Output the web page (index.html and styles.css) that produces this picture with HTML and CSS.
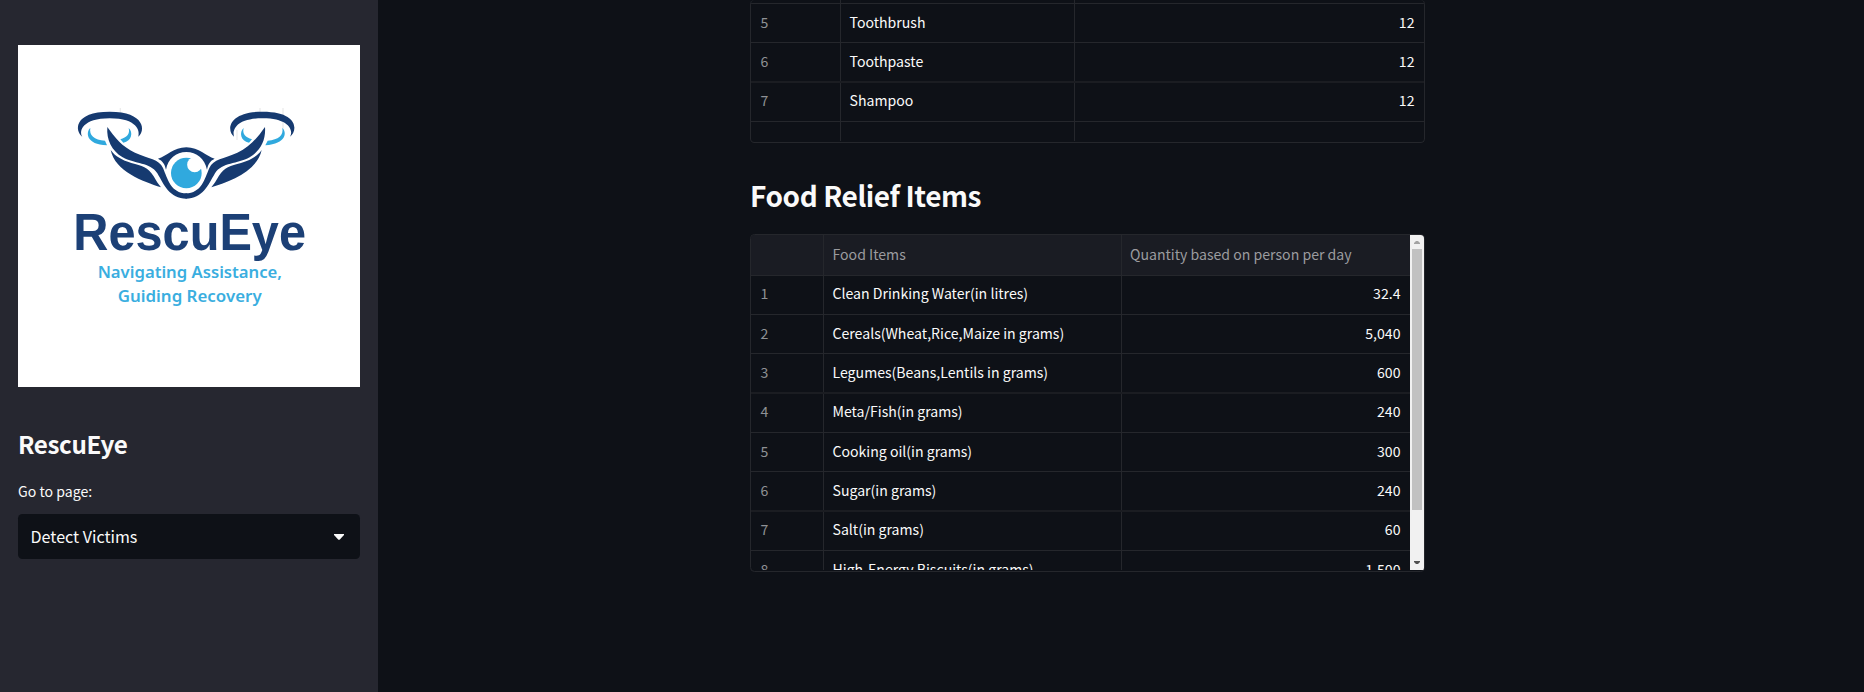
FILE: index.html
```html
<!DOCTYPE html>
<html lang="en">
<head>
<meta charset="utf-8">
<title>RescuEye</title>
<link rel="stylesheet" href="styles.css">
</head>
<body>
<div class="app">
  <aside class="sidebar">
    <svg class="logo" viewBox="54 45 1026 1026" role="img" aria-label="RescuEye logo">
      <g class="marks"><path d="M361 234v14M780 234v14M849 234v62M711 300v30"/></g>
      <defs>
        <g id="wing">
          <path class="navy" d="M247 320C224 303 220 245 329 245C436 245 437 303 415 320C420 303 412 265 329 265C248 265 236 303 247 320Z"/>
          <path class="navy" d="M322 291C319 330 335 362 368 382C405 403 450 396 472 430C492 464 508 506 560 506L560 490C512 490 503 446 489 414C477 386 446 387 405 368C366 350 344 322 322 291Z"/>
          <path class="navy" d="M332 360C346 380 366 390 394 399C426 408 444 411 461 439C468 452 475 463 483 472C430 455 345 424 332 360Z"/>
        </g>
      </defs>
      <use href="#wing"/>
      <use href="#wing" transform="translate(1117 0) scale(-1 1)"/>
      <path class="sky" d="M271 294C257 306 257 344 321 346L315 332C282 330 267 316 271 294Z"/>
      <path class="sky" d="M386 294C400 306 396 334 370 338L361 328C380 322 391 312 386 294Z"/>
      <path class="sky" d="M731 294C717 306 721 334 747 338L756 328C737 322 726 312 731 294Z"/>
      <path class="sky" d="M847 294C861 306 860 342 796 346L803 332C836 329 851 316 847 294Z"/>
      <path class="navy" d="M474 386C501 379 520 352 559 352C598 352 617 379 644 386C630 393 625 401 621 419C614 386 590 366 559 366C528 366 504 386 498 419C494 401 488 393 474 386Z"/>
      <circle class="sky" cx="559" cy="429" r="46"/>
      <circle class="white" cx="584" cy="404" r="22.5"/>
      <text class="brand" x="220" y="659" textLength="698" lengthAdjust="spacingAndGlyphs">RescuEye</text>
      <text class="tagline" x="293" y="744" textLength="553" lengthAdjust="spacingAndGlyphs">Navigating Assistance,</text>
      <text class="tagline" x="353" y="816" textLength="432" lengthAdjust="spacingAndGlyphs">Guiding Recovery</text>
    </svg>
    <h1 class="title">RescuEye</h1>
    <div class="label">Go to page:</div>
    <div class="select"><span>Detect Victims</span>
      <svg class="caret" viewBox="0 0 10 6"><path d="M0 0h10v1L5.6 5.7h-1.200L0 1z"/></svg>
    </div>
  </aside>
  <main class="main">
    <section class="frame hygiene">
      <div class="row first"><span class="idx"></span><span></span><span></span></div>
      <div class="row"><span class="idx">5</span><span>Toothbrush</span><span class="num">12</span></div>
      <div class="row soft"><span class="idx">6</span><span>Toothpaste</span><span class="num">12</span></div>
      <div class="row"><span class="idx">7</span><span>Shampoo</span><span class="num">12</span></div>
      <div class="row last"><span class="idx"></span><span></span><span></span></div>
    </section>
    <h2 class="heading">Food Relief Items</h2>
    <section class="frame food">
      <div class="rows">
        <div class="row head"><span></span><span>Food Items</span><span class="qty">Quantity based on person per day</span></div>
        <div class="row"><span class="idx">1</span><span>Clean Drinking Water(in litres)</span><span class="num">32.4</span></div>
        <div class="row"><span class="idx">2</span><span>Cereals(Wheat,Rice,Maize in grams)</span><span class="num">5,040</span></div>
        <div class="row soft"><span class="idx">3</span><span>Legumes(Beans,Lentils in grams)</span><span class="num">600</span></div>
        <div class="row"><span class="idx">4</span><span>Meta/Fish(in grams)</span><span class="num">240</span></div>
        <div class="row"><span class="idx">5</span><span>Cooking oil(in grams)</span><span class="num">300</span></div>
        <div class="row soft"><span class="idx">6</span><span>Sugar(in grams)</span><span class="num">240</span></div>
        <div class="row"><span class="idx">7</span><span>Salt(in grams)</span><span class="num">60</span></div>
        <div class="row"><span class="idx">8</span><span>High-Energy Biscuits(in grams)</span><span class="num">1,500</span></div>
      </div>
      <div class="scrollbar">
        <svg class="arrow up" viewBox="0 0 6 3"><path d="M2 0h2l2 2v1H0V2z"/></svg>
        <div class="thumb"></div>
        <svg class="arrow down" viewBox="0 0 6 3"><path d="M0 0h6v1L4 3H2L0 1z"/></svg>
      </div>
    </section>
  </main>
</div>
</body>
</html>
```
FILE: styles.css
```css
* { box-sizing: border-box; }
body {
  margin: 0;
  height: 692px;
  overflow: hidden;
  background: #0e1117;
  color: #fafafa;
  font-family: "Noto Sans CJK SC", "Noto Sans", sans-serif;
}
.app { display: flex; height: 692px; }

.sidebar {
  width: 378px;
  flex: none;
  padding: 45px 18px 0;
  background: #262730;
}
.logo { display: block; width: 342px; height: 342px; background: #fff; }
.navy { fill: #163a70; }
.sky { fill: #30a9de; }
.white { fill: #fff; }
.marks { fill: none; stroke: #ececec; stroke-width: 4; }
.brand { font: bold 154px "Liberation Sans", Arial, sans-serif; fill: #1c4076; }
.tagline { font: 600 50px "Noto Sans", sans-serif; fill: #3aaee0; }

.title {
  margin: 39px 0 0;
  height: 36px;
  line-height: 36px;
  font-size: 24.2px;
  font-weight: 700;
  letter-spacing: -0.4px;
}
.label { margin-top: 17px; height: 24px; line-height: 24px; font-size: 14.1px; }
.select {
  display: flex;
  align-items: center;
  justify-content: space-between;
  margin-top: 11px;
  height: 45px;
  padding: 0 16px 0 12.5px;
  border-radius: 4.500px;
  background: #0e1117;
  font-size: 16.1px;
}
.select span { padding-bottom: 2px; }
.caret { width: 10px; height: 6px; fill: #fafafa; }

.main { margin-left: 372px; width: 675px; }
.frame {
  width: 675px;
  border: 1px solid #25272c;
  border-radius: 4.500px;
  overflow: hidden;
}
.row {
  display: grid;
  height: 39px;
  border-bottom: 1px solid #25272c;
  font-size: 14.1px;
  line-height: 36px;
  white-space: nowrap;
}
.row > span { padding: 0 9.500px 0 8.500px; border-right: 1px solid #25272c; overflow: hidden; }
.row > span:last-child { border-right: 0; }
.row .idx { padding-left: 9.500px; color: #8f9195; }
.row .num { text-align: right; }
.soft { height: 40px; border-bottom: 2px solid #1b1d22; }
.soft + .row, .head + .row { line-height: 34px; }

.hygiene { border-top: 0; height: 143px; }
.hygiene .row { grid-template-columns: 90px 234px 1fr; }
.hygiene .first { height: 4px; }
.hygiene .last { height: 19px; border-bottom: 0; }

.heading {
  margin: 31px 0 0;
  height: 42px;
  line-height: 42px;
  font-size: 28px;
  font-weight: 700;
  letter-spacing: -0.42px;
}

.food { display: flex; height: 338px; margin-top: 18px; }
.rows { width: 659px; height: 335px; overflow: hidden; }
.food .row { grid-template-columns: 73px 298px 1fr; }
.food .head { height: 41px; line-height: 38px; background: #1a1c23; color: #9a9b9f; }
.food .qty { padding-left: 8px; }
.scrollbar {
  display: flex;
  flex-direction: column;
  align-items: center;
  width: 14px;
  height: 335px;
  background: #f1f1f1;
}
.arrow { width: 6px; height: 3px; flex: none; }
.up { margin: 6px 0 5px; fill: #a3a3a3; }
.thumb { width: 10px; height: 261px; background: #c1c1c1; }
.down { margin-top: auto; margin-bottom: 6px; fill: #505050; }
```
